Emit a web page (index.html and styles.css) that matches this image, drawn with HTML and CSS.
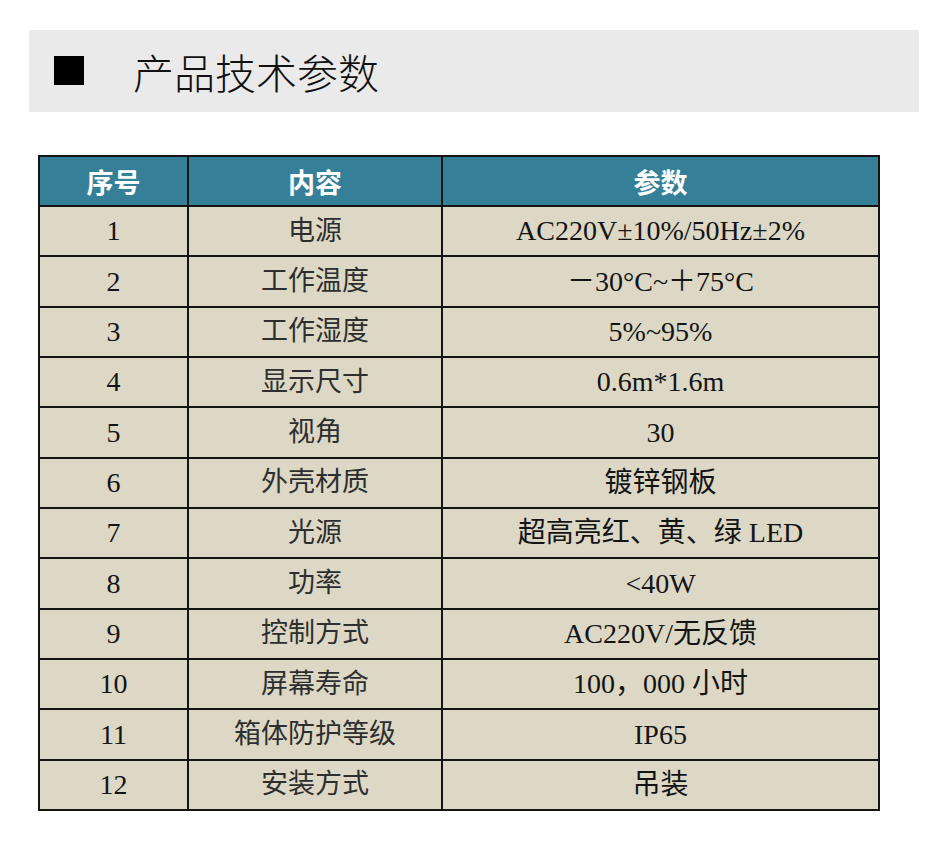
FILE: index.html
```html
<!DOCTYPE html>
<html lang="zh-CN">
<head>
<meta charset="utf-8">
<title>产品技术参数</title>
<link rel="stylesheet" href="styles.css">
</head>
<body>
<div class="page">
  <div class="band">
    <span class="square"></span>
    <h1 class="title">产品技术参数</h1>
  </div>
  <table class="spec">
    <colgroup>
      <col class="c1"><col class="c2"><col class="c3">
    </colgroup>
    <thead>
      <tr><th>序号</th><th>内容</th><th>参数</th></tr>
    </thead>
    <tbody>
      <tr><td>1</td><td>电源</td><td>AC220V±10%/50Hz±2%</td></tr>
      <tr><td>2</td><td>工作温度</td><td>－30°C~＋75°C</td></tr>
      <tr><td>3</td><td>工作湿度</td><td>5%~95%</td></tr>
      <tr><td>4</td><td>显示尺寸</td><td>0.6m*1.6m</td></tr>
      <tr><td>5</td><td>视角</td><td>30</td></tr>
      <tr><td>6</td><td>外壳材质</td><td>镀锌钢板</td></tr>
      <tr><td>7</td><td>光源</td><td>超高亮红、黄、绿 LED</td></tr>
      <tr><td>8</td><td>功率</td><td>&lt;40W</td></tr>
      <tr><td>9</td><td>控制方式</td><td>AC220V/无反馈</td></tr>
      <tr><td>10</td><td>屏幕寿命</td><td>100，000 小时</td></tr>
      <tr><td>11</td><td>箱体防护等级</td><td>IP65</td></tr>
      <tr><td>12</td><td>安装方式</td><td>吊装</td></tr>
    </tbody>
  </table>
</div>
</body>
</html>
```
FILE: styles.css
```css
html, body {
  margin: 0;
  padding: 0;
  background: #ffffff;
}
body {
  font-family: "Liberation Serif", "Noto Sans CJK SC", serif;
  color: #1c1c1c;
}
.page {
  padding-top: 30px;
}
.band {
  margin-left: 29px;
  width: 890px;
  height: 82px;
  background: #ebeaea;
  display: flex;
  align-items: center;
  box-sizing: border-box;
  padding-left: 25px;
}
.square {
  display: block;
  width: 30px;
  height: 29px;
  background: #000;
  margin-top: -2px;
}
.title {
  margin: 0 0 0 49px;
  font-family: "Noto Sans CJK SC", sans-serif;
  font-weight: 300;
  font-size: 41px;
  line-height: 1;
  color: #111;
}
.spec {
  margin-top: 43px;
  margin-left: 38px;
  width: 840px;
  border-collapse: collapse;
  table-layout: fixed;
  border: 2px solid #141414;
}
.c1 { width: 149px; }
.c2 { width: 254px; }
.c3 { width: 437px; }
.spec th,
.spec td {
  border: 2px solid #141414;
  padding: 0;
  text-align: center;
  vertical-align: middle;
  line-height: 1;
}
.spec th {
  height: 48px;
  font-size: 27px;
  background: #367f98;
  color: #ffffff;
  font-family: "Noto Sans CJK SC", sans-serif;
  font-weight: 700;
}
.spec td {
  height: 48.35px;
  font-size: 28px;
  background: #dcd8c5;
  color: #141414;
}
.spec td:nth-child(2) {
  font-size: 27px;
  color: #2e2e2e;
}
```
